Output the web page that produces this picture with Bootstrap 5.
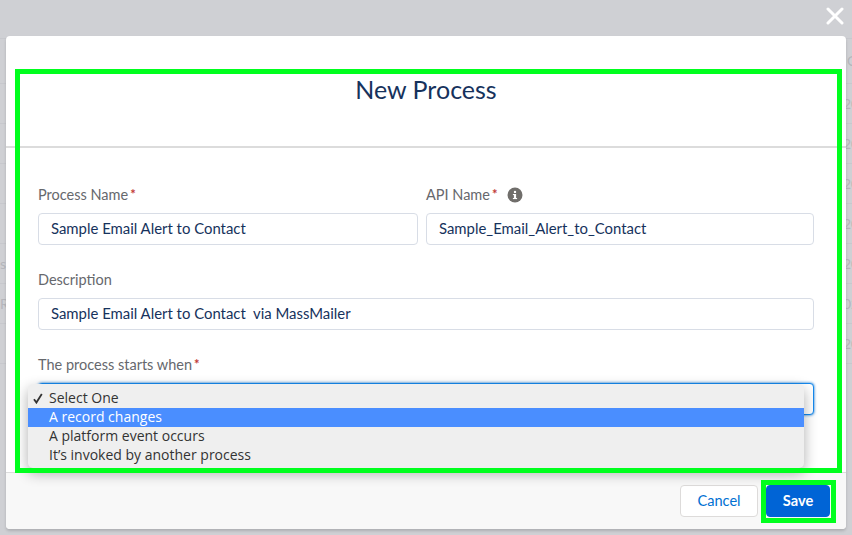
<!DOCTYPE html>
<html lang="en">
<head>
<meta charset="utf-8">
<title>New Process</title>
<link href="https://cdn.jsdelivr.net/npm/bootstrap@5.3.0/dist/css/bootstrap.min.css" rel="stylesheet">
<style>
html,body{height:100%;}
body{background:#cfd0d4;overflow:hidden;font-family:"Lato","Noto Sans",sans-serif;font-size:14px;position:relative;}
.page-rows{padding-top:38px;}
.page-row{height:40px;border-bottom:1px solid #c7c8cd;color:#b5b6bb;font-size:14px;line-height:39px;overflow:hidden;}
.page-row.first-row{height:46px;border-top:1px solid #c7c8cd;line-height:44px;}
.edge-l{width:6px;overflow:hidden;white-space:nowrap;}
.edge-r{width:6px;overflow:hidden;white-space:nowrap;}
.edge-r.shift{text-indent:-3px;}
.edge-r.nudge{text-indent:1px;}
.close-x{position:absolute;top:7px;right:8px;width:18px;height:18px;}
.proc-dialog{position:absolute;top:36px;left:6px;width:840px;height:493px;}
.proc-dialog .modal-content{height:100%;background:#fff;border:0;border-radius:4px;box-shadow:0 2px 3px rgba(0,0,0,.16);}
.proc-head{height:112px;padding:36px 0 0;border-bottom:2px solid #dcdcdc;border-radius:0;justify-content:center;align-items:flex-start;}
.proc-title{font-family:"Lato",sans-serif;font-size:25px;line-height:34px;font-weight:400;color:#16325c;margin:0;}
.proc-body{padding:36px 32px 0;flex:1 1 auto;}
.proc-gap{--bs-gutter-x:8px;--bs-gutter-y:0;}
.proc-label{color:#66686d;font-size:14.5px;line-height:20px;margin-bottom:8px;height:21px;display:flex;align-items:center;}
.req{color:#c23934;margin-left:2px;font-weight:700;font-size:13px;position:relative;top:-1px;}
.info-ic{width:16px;height:16px;margin-left:10px;}
.proc-col-a{width:388px;}
.proc-col-b{width:396px;}
.proc-field{height:32px;border:1px solid #d8dde6;border-radius:4px;color:#16325c;font-size:14.9px;padding:0 12px 2px;margin-bottom:24px;line-height:30px;box-shadow:none;}
.proc-sel-wrap{position:relative;}
.proc-sel{height:32px;border:1px solid #1589ee;border-radius:4px;box-shadow:0 0 3px #0070d2;padding:0 12px;color:#16325c;font-size:14px;background-image:none;}
.os-menu{position:absolute;top:1px;left:-10px;width:776px;height:84px;background:#efefef;border-radius:5px;padding:5px 0 3px;box-shadow:0 5px 14px rgba(0,0,0,.32);font-family:"Open Sans","Noto Sans",sans-serif;font-size:14px;line-height:18px;color:#333;}
.os-item{height:19px;padding-left:21px;position:relative;white-space:nowrap;}
.os-item.hot{background:#4a8eff;color:#fff;}
.os-check{position:absolute;left:5px;top:4px;width:10px;height:11px;}
.proc-foot{height:57px;background:#f8f8f8;border-top:1px solid #dcdcdc;padding:12px 16px 0 0;justify-content:flex-end;align-items:flex-start;gap:8px;border-radius:0 0 4px 4px;flex-wrap:nowrap;}
.proc-btn{height:32px;margin:0;padding:0;font-size:14.6px;line-height:30px;border-radius:4px;font-family:"Lato",sans-serif;}
.btn-cancel{width:78px;background:#fff;border:1px solid #dddbda;color:#0070d2;}
.btn-save{width:64px;background:#0064d6;border:1px solid #0064d6;color:#fff;font-weight:700;}
.mark-main{position:absolute;left:15px;top:69px;width:827px;height:404px;border:5px solid #00ff1e;pointer-events:none;}
.mark-save{position:absolute;left:761px;top:480px;width:75px;height:43px;border:5px solid #00ff1e;pointer-events:none;}
</style>
</head>
<body>
<div class="page-rows">
  <div class="page-row first-row d-flex justify-content-between"><span class="edge-l"></span><span class="edge-r nudge">C</span></div>
  <div class="page-row d-flex justify-content-between"><span class="edge-l"></span><span class="edge-r shift">20</span></div>
  <div class="page-row d-flex justify-content-between"><span class="edge-l"></span><span class="edge-r shift">20</span></div>
  <div class="page-row d-flex justify-content-between"><span class="edge-l"></span><span class="edge-r shift">20</span></div>
  <div class="page-row d-flex justify-content-between"><span class="edge-l"></span><span class="edge-r shift">20</span></div>
  <div class="page-row d-flex justify-content-between"><span class="edge-l">s</span><span class="edge-r shift">20</span></div>
  <div class="page-row d-flex justify-content-between"><span class="edge-l">Re</span><span class="edge-r shift">02</span></div>
  <div class="page-row d-flex justify-content-between"><span class="edge-l"></span><span class="edge-r shift">20</span></div>
</div>

<svg class="close-x" viewBox="0 0 18 18" aria-label="Close"><path d="M2 2 16 16M16 2 2 16" stroke="#fff" stroke-width="3" stroke-linecap="round"/></svg>

<div class="proc-dialog">
  <div class="modal-content">
    <div class="modal-header proc-head"><h1 class="proc-title">New Process</h1></div>
    <div class="modal-body proc-body">
      <div class="row proc-gap">
        <div class="col-auto proc-col-a">
          <label class="proc-label">Process Name<span class="req">*</span></label>
          <input class="form-control proc-field" value="Sample Email Alert to Contact">
        </div>
        <div class="col-auto proc-col-b">
          <label class="proc-label">API Name<span class="req">*</span>
            <svg class="info-ic" viewBox="0 0 16 16"><circle cx="8" cy="8" r="7.5" fill="#706e6b"/><rect x="6.9" y="7" width="2.2" height="5" fill="#fff"/><rect x="5.9" y="7" width="2" height="1.1" fill="#fff"/><rect x="5.9" y="11" width="4.2" height="1.1" fill="#fff"/><circle cx="8" cy="4.9" r="1.2" fill="#fff"/></svg>
          </label>
          <input class="form-control proc-field" value="Sample_Email_Alert_to_Contact">
        </div>
      </div>
      <label class="proc-label">Description</label>
      <input class="form-control proc-field" value="Sample Email Alert to Contact  via MassMailer">
      <label class="proc-label">The process starts when<span class="req">*</span></label>
      <div class="proc-sel-wrap">
        <div class="form-select proc-sel"></div>
        <div class="os-menu">
          <div class="os-item"><svg class="os-check" viewBox="0 0 10 11"><path d="M1 6.3 3.4 9.6 8.8 1" fill="none" stroke="#333" stroke-width="1.8"/></svg>Select One</div>
          <div class="os-item hot">A record changes</div>
          <div class="os-item">A platform event occurs</div>
          <div class="os-item">It’s invoked by another process</div>
        </div>
      </div>
    </div>
    <div class="modal-footer proc-foot">
      <button class="btn proc-btn btn-cancel">Cancel</button>
      <button class="btn proc-btn btn-save">Save</button>
    </div>
  </div>
</div>

<div class="mark-main"></div>
<div class="mark-save"></div>
<script src="https://cdn.jsdelivr.net/npm/bootstrap@5.3.0/dist/js/bootstrap.bundle.min.js"></script>
</body>
</html>
